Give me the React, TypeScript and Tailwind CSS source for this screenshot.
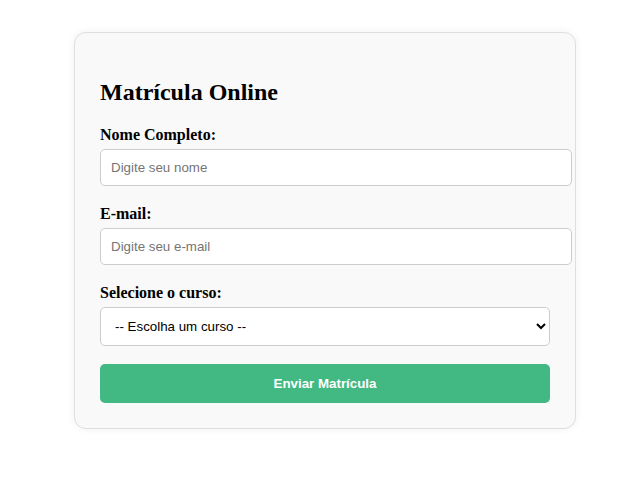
import React, { useState } from "react";

const labelCls =
  "block font-bold text-[16px] leading-[18px] mb-[5px] text-black";
const inputCls =
  "block w-[472px] h-[37px] px-[10px] border border-[#ccc] rounded-[5px] bg-white text-[13.33px] text-black placeholder:text-[#757575] outline-none";

const App = () => {
  const [nome, setNome] = useState("");
  const [email, setEmail] = useState("");
  const [curso, setCurso] = useState("");

  return (
    <div className="min-h-screen bg-white pt-[32px] pl-[74px] font-['Liberation_Serif',serif]">
      <div className="w-[502px] bg-[#f9f9f9] border border-[#dedede] rounded-[12px] shadow-[0_0_8px_rgba(0,0,0,0.06)] px-[25px] pt-[25px] pb-[25px]">
        <h2 className="mt-[20px] mb-[20px] text-[24px] leading-[28px] font-bold text-black">
          Matrícula Online
        </h2>

        <form onSubmit={(e) => e.preventDefault()}>
          <label className={labelCls}>Nome Completo:</label>
          <input
            type="text"
            value={nome}
            onChange={(e) => setNome(e.target.value)}
            placeholder="Digite seu nome"
            className={inputCls + " mb-[19px] font-['Liberation_Sans',Arial,sans-serif]"}
          />

          <label className={labelCls}>E-mail:</label>
          <input
            type="email"
            value={email}
            onChange={(e) => setEmail(e.target.value)}
            placeholder="Digite seu e-mail"
            className={inputCls + " mb-[19px] font-['Liberation_Sans',Arial,sans-serif]"}
          />

          <label className={labelCls}>Selecione o curso:</label>
          <select
            value={curso}
            onChange={(e) => setCurso(e.target.value)}
            className="block w-[450px] h-[39px] px-[10px] mb-[18px] border border-[#ccc] rounded-[5px] bg-white text-[13.33px] text-black font-['Liberation_Sans',Arial,sans-serif] outline-none appearance-auto"
          >
            <option value="">-- Escolha um curso --</option>
            <option value="ads">Análise e Desenvolvimento de Sistemas</option>
            <option value="eng">Engenharia de Software</option>
            <option value="cc">Ciência da Computação</option>
          </select>

          <button
            type="submit"
            className="block w-[450px] h-[39px] rounded-[5px] bg-[#42b983] text-white font-bold text-[13.33px] font-['Liberation_Sans',Arial,sans-serif]"
          >
            Enviar Matrícula
          </button>
        </form>
      </div>
    </div>
  );
};

export default App;
